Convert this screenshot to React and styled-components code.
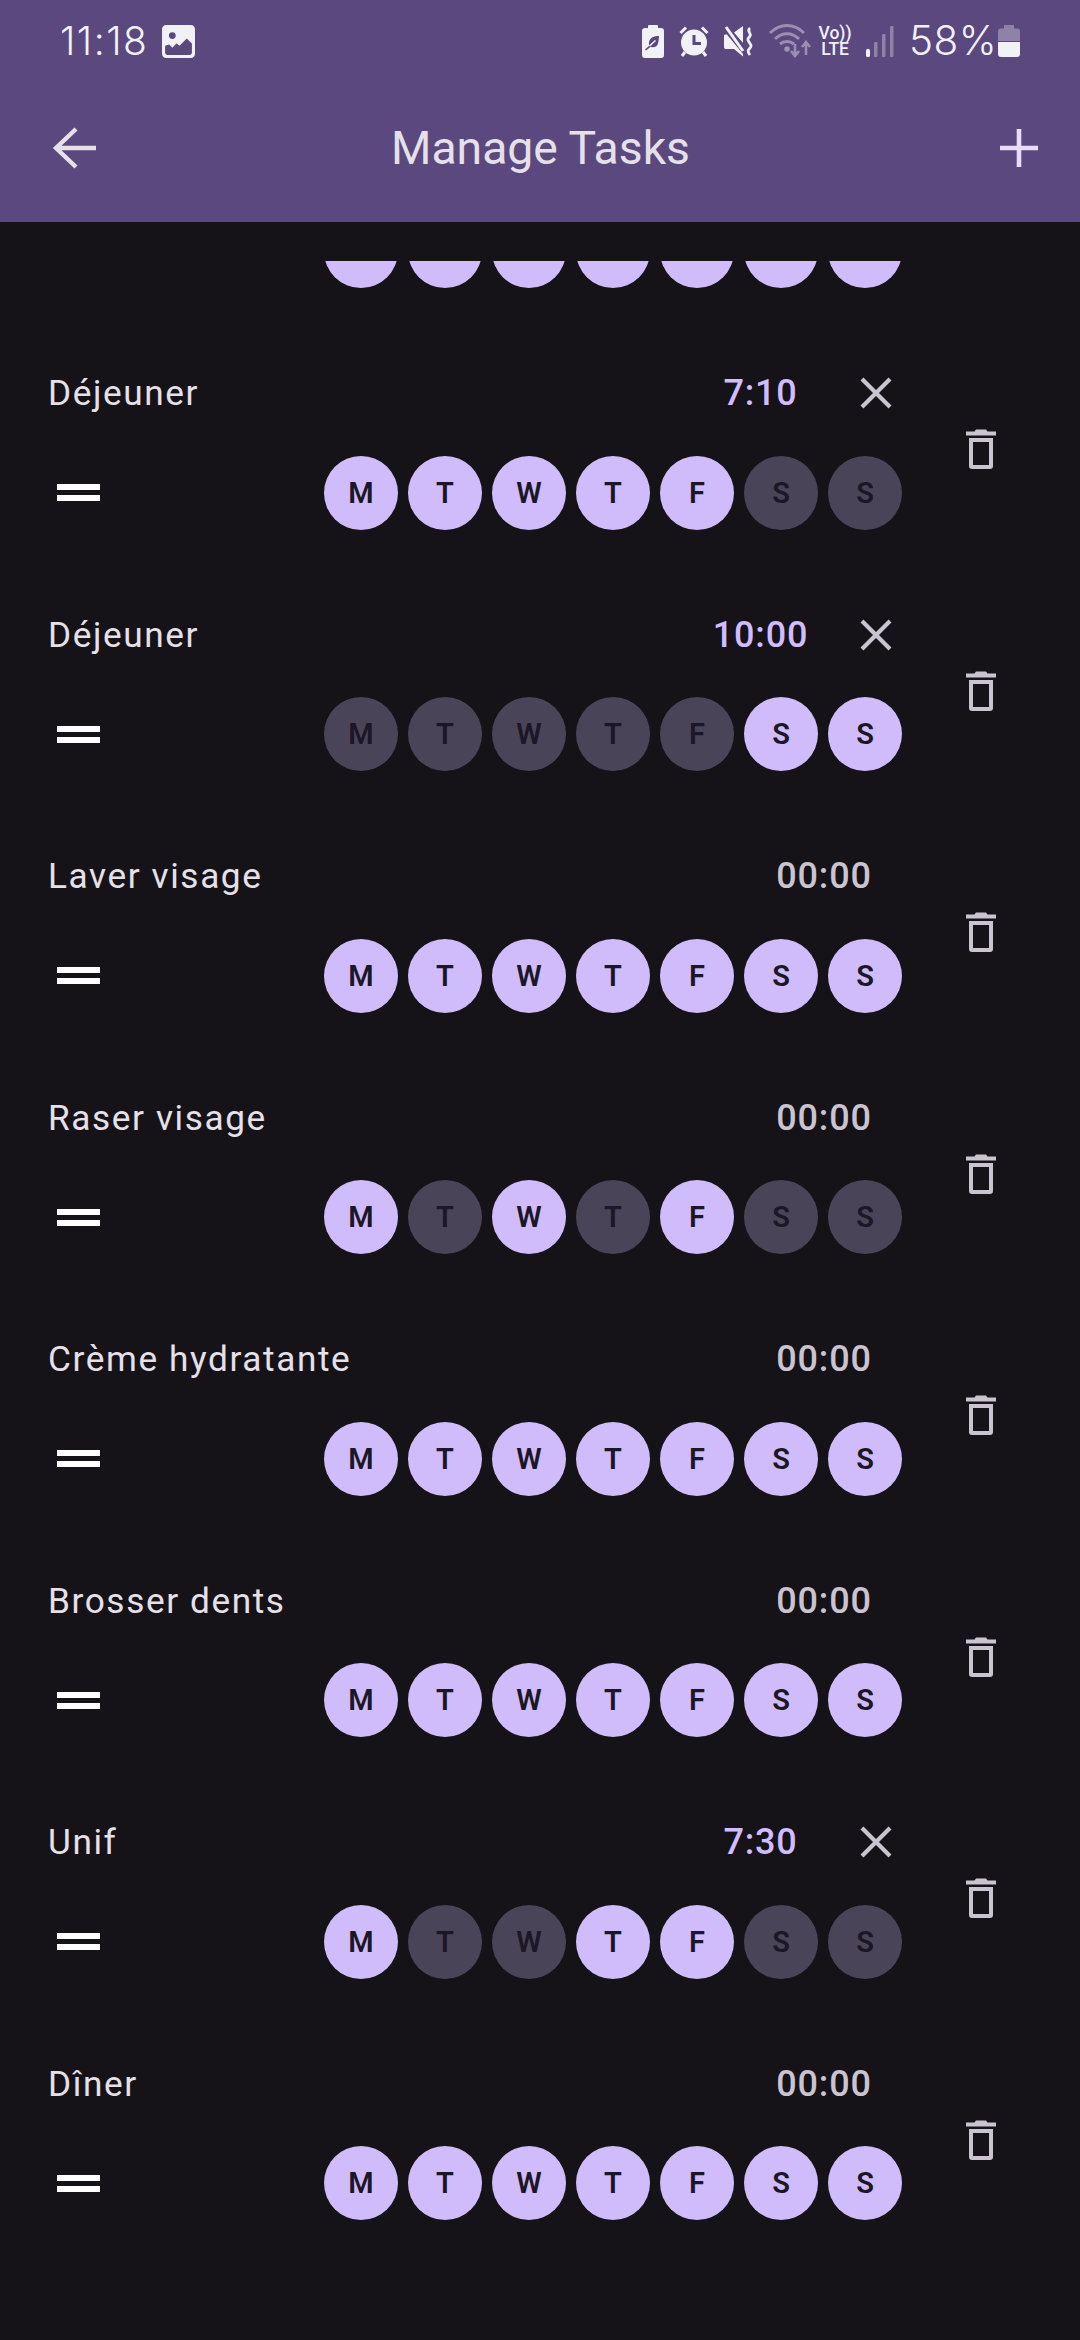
import React from "react";
import styled, { createGlobalStyle } from "styled-components";

const Global = createGlobalStyle`
  html, body { margin: 0; padding: 0; background: #151318; }
  #root { width: 1080px; height: 2340px; overflow: hidden; }
`;

const Page = styled.div`
  width: 1080px;
  height: 2340px;
  display: flex;
  flex-direction: column;
  background: #151318;
  font-family: Roboto, "Liberation Sans", sans-serif;
  overflow: hidden;
`;

const Header = styled.header`
  height: 222px;
  flex: none;
  background: #5a487e;
  display: flex;
  flex-direction: column;
`;

const StatusBar = styled.div`
  height: 74px;
  padding: 8px 60px 0 60px;
  box-sizing: border-box;
  display: flex;
  align-items: center;
  justify-content: space-between;
  color: #f3f1f8;
`;

const StatusGroup = styled.div`
  display: flex;
  align-items: center;
  gap: ${(p) => p.$gap || 0}px;
`;

const StatusText = styled.span`
  font-family: Inter, Roboto, sans-serif;
  font-size: ${(p) => p.$size}px;
  font-weight: 300;
  line-height: 44px;
  letter-spacing: ${(p) => p.$track}px;
`;

const AppBar = styled.div`
  flex: 1;
  padding: 0 42px 0 52px;
  display: flex;
  align-items: center;
  color: #e6e0e9;
`;

const BarSide = styled.div`
  flex: 1;
  display: flex;
  justify-content: ${(p) => (p.$end ? "flex-end" : "flex-start")};
`;

const Title = styled.h1`
  margin: 0 9px 0 0;
  font-size: 46.3px;
  font-weight: 400;
  line-height: 56px;
  color: #e6e0e9;
`;

const Scroller = styled.main`
  margin-top: 39px;
  flex: 1;
  min-height: 0;
  overflow: hidden;
`;

const ScrolledOffRow = styled.div`
  height: 102.1px;
  padding-left: 324px;
  display: flex;
  align-items: flex-start;
`;

const ScrolledOffDays = styled.div`
  margin-top: -46.9px;
  display: flex;
  gap: 10px;
`;

const Row = styled.section`
  height: 241.5px;
  box-sizing: border-box;
  padding-left: 48px;
  display: flex;
  align-items: flex-start;
`;

const RowBody = styled.div`
  width: 854px;
  flex: none;
`;

const TopLine = styled.div`
  height: 60px;
  display: flex;
  align-items: center;
  justify-content: space-between;
`;

const Name = styled.span`
  font-size: 35.2px;
  letter-spacing: 1.6px;
  color: #e6e0e9;
`;

const TimeGroup = styled.div`
  display: flex;
  align-items: center;
`;

const Time = styled.span`
  display: block;
  width: ${(p) => (p.$set ? 120 : 98)}px;
  margin-right: ${(p) => (p.$set ? 21 : 29)}px;
  text-align: center;
  font-size: 36px;
  font-weight: 500;
  letter-spacing: 0.8px;
  color: ${(p) => (p.$set ? "#d0bcff" : "#cac4d0")};
`;

const Clear = styled.span`
  width: 100px;
  margin-right: -23.5px;
  margin-left: -16px;
  display: flex;
  justify-content: center;
  color: #cac4d0;
`;

const BottomLine = styled.div`
  margin-top: 30.5px;
  height: 78px;
  display: flex;
  align-items: center;
  justify-content: space-between;
`;

const Handle = styled.span`
  margin-left: 9px;
  width: 43px;
  height: 17px;
  box-sizing: border-box;
  border-top: 6.5px solid #fff;
  border-bottom: 6.5px solid #fff;
`;

const Days = styled.div`
  display: flex;
  gap: 10px;
`;

const Day = styled.span`
  width: 74px;
  height: 74px;
  flex: none;
  border-radius: 50%;
  display: flex;
  align-items: center;
  justify-content: center;
  background: ${(p) => (p.$on ? "#d0bcfb" : "#4a4458")};
  color: #1c1726;
  font-size: 29px;
  font-weight: 600;
`;

const Trash = styled.span`
  margin-left: 54.5px;
  margin-top: 65px;
  width: 48px;
  display: flex;
  justify-content: center;
  color: #cac4d0;
`;

const icon = { display: "block" };

const BackIcon = () => (
  <svg width="44" height="44" viewBox="0 0 44 44" style={icon}>
    <path d="M44 22H5M24 3L4 22l20 19" fill="none" stroke="#e6e0e9" strokeWidth="4.4" />
  </svg>
);

const PlusIcon = () => (
  <svg width="38" height="38" viewBox="0 0 38 38" style={icon}>
    <path d="M19 0v38M0 19h38" stroke="#e8dcf9" strokeWidth="4.6" />
  </svg>
);

const XIcon = () => (
  <svg width="32" height="32" viewBox="0 0 32 32" style={icon}>
    <path d="M2 2l28 28M30 2L2 30" stroke="currentColor" strokeWidth="4.2" fill="none" />
  </svg>
);

const TrashIcon = () => (
  <svg width="32" height="42" viewBox="0 0 32 42" style={icon}>
    <path d="M11 1.500h10l1.500 2H31v4H1v-4h8.500z" fill="currentColor" />
    <path d="M4 10h24v28a3 3 0 0 1-3 3H7a3 3 0 0 1-3-3zm4 4v23h16V14z" fill="currentColor" fillRule="evenodd" />
  </svg>
);

const GalleryIcon = () => (
  <svg width="33" height="33" viewBox="0 0 32 32" style={icon}>
    <path fillRule="evenodd" fill="currentColor" d="M4 0h24a4 4 0 0 1 4 4v24a4 4 0 0 1-4 4H4a4 4 0 0 1-4-4V4a4 4 0 0 1 4-4zM10 7a3.300 3.300 0 1 0 0 6.600A3.300 3.300 0 0 0 10 7zM3 20v7a2 2 0 0 0 2 2h22a2 2 0 0 0 2-2v-9l-5-5-7 7-3-2-4 4-3-3z" />
  </svg>
);

const EcoBatteryIcon = () => (
  <svg width="22" height="33" viewBox="0 0 22 33" style={icon}>
    <path fillRule="evenodd" fill="currentColor" d="M7 0h8a1 1 0 0 1 1 1v2h3a3 3 0 0 1 3 3v24a3 3 0 0 1-3 3H3a3 3 0 0 1-3-3V6a3 3 0 0 1 3-3h3V1a1 1 0 0 1 1-1zM17 11c-5 0-9 1.500-10 6-.3 1.500 0 3 .5 3.500L3 24.500l1 1 4.700-3.800c2.300 1 5 .5 6.300-1.200 1.500-2 1.700-5.500 2-9.500zM13 15l1 1-6 5.500-1-1z" />
  </svg>
);

const AlarmIcon = () => (
  <svg width="30" height="32" viewBox="0 0 30 32" style={icon}>
    <path fillRule="evenodd" fill="currentColor" d="M15 4.500a13 13 0 1 1 0 26 13 13 0 0 1 0-26zM13.500 10v10H22v-3h-5.500v-7z" />
    <path d="M1.500 8L7 2.500M28.500 8L23 2.500M6 27l-3 4M24 27l3 4" stroke="currentColor" strokeWidth="3" fill="none" />
  </svg>
);

const MuteIcon = () => (
  <svg width="30" height="32" viewBox="0 0 30 32" style={icon}>
    <path fill="currentColor" d="M0 11c0-1 .6-1.500 1.500-1.500H3L19 29v2.500L10 24H2c-1 0-2-.6-2-2zM19 1v17L10 7.500z" />
    <path d="M2 2l17 24" stroke="currentColor" strokeWidth="3" />
    <path d="M26 3c-4 3 2 5 0 8s-3 3-1 6 3 4 1 6-3 3 0 7" stroke="currentColor" strokeWidth="2.800" fill="none" />
  </svg>
);

const WifiIcon = () => (
  <svg width="42" height="34" viewBox="0 0 42 34" style={{ ...icon, opacity: 0.42 }}>
    <path d="M1 9c10-10 24-10 34 0M6 15c7-7 17-7 24 0M11 20c4-3.500 10-3.500 14 0" stroke="currentColor" strokeWidth="3" fill="none" />
    <circle cx="18" cy="25" r="2.700" fill="#fff" />
    <path d="M26 20v12M22 27l4 5 4-5M37 31V18M33 23l4-5 4 5" stroke="currentColor" strokeWidth="2.600" fill="none" />
  </svg>
);

const SignalIcon = () => (
  <svg width="28" height="31" viewBox="0 0 28 31" style={icon}>
    <rect x="0" y="23" width="4" height="8" rx="1.500" fill="#f3f1f8" />
    <rect x="8" y="16" width="3.500" height="15" rx="1" fill="#f3f1f8" opacity="0.35" />
    <rect x="16" y="8" width="3.500" height="23" rx="1" fill="#f3f1f8" opacity="0.35" />
    <rect x="24" y="0" width="3.500" height="31" rx="1" fill="#f3f1f8" opacity="0.35" />
  </svg>
);

const BatterySlot = styled.span`
  margin-left: -14px;
`;

const BatteryIcon = () => (
  <BatterySlot>
    <svg width="22" height="32" viewBox="0 0 22 32" style={icon}>
      <path d="M6 0h10v3.500h3a3 3 0 0 1 3 3V16H0V6.500a3 3 0 0 1 3-3h3z" fill="#f3f1f8" opacity="0.35" />
      <path d="M0 17h22v12a3 3 0 0 1-3 3H3a3 3 0 0 1-3-3z" fill="#f3f1f8" />
    </svg>
  </BatterySlot>
);

const VoLte = styled.span`
  display: flex;
  flex-direction: column;
  align-items: center;
  font-size: 17.5px;
  font-weight: 500;
  line-height: 16px;
  font-family: Roboto, sans-serif;
  width: 32px;
  margin-left: -7px;
`;

const LABELS = ["M", "T", "W", "T", "F", "S", "S"];
const all = [1, 1, 1, 1, 1, 1, 1];
const tasks = [
  { name: "Déjeuner", time: "7:10", set: true, days: [1, 1, 1, 1, 1, 0, 0] },
  { name: "Déjeuner", time: "10:00", set: true, days: [0, 0, 0, 0, 0, 1, 1] },
  { name: "Laver visage", time: "00:00", days: all },
  { name: "Raser visage", time: "00:00", days: [1, 0, 1, 0, 1, 0, 0] },
  { name: "Crème hydratante", time: "00:00", days: all },
  { name: "Brosser dents", time: "00:00", days: all },
  { name: "Unif", time: "7:30", set: true, days: [1, 0, 0, 1, 1, 0, 0] },
  { name: "Dîner", time: "00:00", days: all },
];

export default function App() {
  return (
    <Page>
      <Global />
      <Header>
        <StatusBar>
          <StatusGroup $gap={14}>
            <StatusText $size={39} $track={1.5}>11:18</StatusText>
            <GalleryIcon />
          </StatusGroup>
          <StatusGroup $gap={15}>
            <EcoBatteryIcon />
            <AlarmIcon />
            <MuteIcon />
            <WifiIcon />
            <VoLte><span>Vo))</span><span>LTE</span></VoLte>
            <SignalIcon />
            <StatusText $size={40.5} $track={0.4}>58%</StatusText>
            <BatteryIcon />
          </StatusGroup>
        </StatusBar>
        <AppBar>
          <BarSide><BackIcon /></BarSide>
          <Title>Manage Tasks</Title>
          <BarSide $end><PlusIcon /></BarSide>
        </AppBar>
      </Header>
      <Scroller>
        <ScrolledOffRow>
          <ScrolledOffDays>
            {LABELS.map((_, j) => (
              <Day key={j} $on />
            ))}
          </ScrolledOffDays>
        </ScrolledOffRow>
        {tasks.map((t, i) => (
          <Row key={i}>
            <RowBody>
              <TopLine>
                <Name>{t.name}</Name>
                <TimeGroup>
                  <Time $set={t.set}>{t.time}</Time>
                  {t.set && <Clear><XIcon /></Clear>}
                </TimeGroup>
              </TopLine>
              <BottomLine>
                <Handle />
                <Days>
                  {LABELS.map((l, j) => (
                    <Day key={j} $on={!!t.days[j]}>{l}</Day>
                  ))}
                </Days>
              </BottomLine>
            </RowBody>
            <Trash><TrashIcon /></Trash>
          </Row>
        ))}
      </Scroller>
    </Page>
  );
}
